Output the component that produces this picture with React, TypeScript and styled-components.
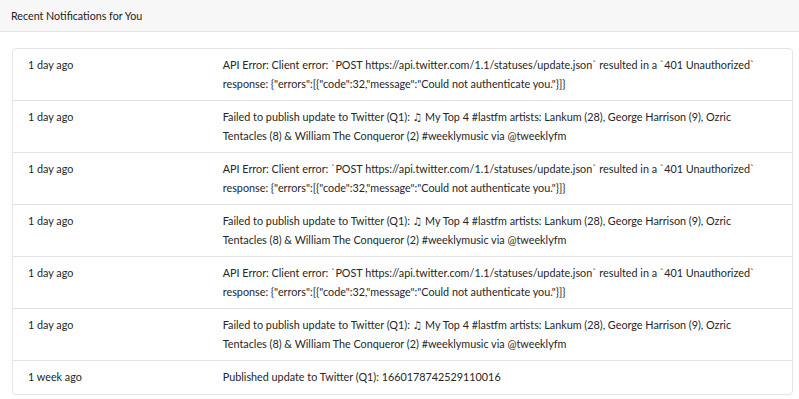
import React from "react";
import styled, { createGlobalStyle } from "styled-components";

type Notification = {
    when: string;
    message: string;
};

const apiError =
    'API Error: Client error: `POST https://api.twitter.com/1.1/statuses/update.json` resulted in a `401 Unauthorized` response: {"errors":[{"code":32,"message":"Could not authenticate you."}]}';
const failed =
    "Failed to publish update to Twitter (Q1): \u266B My Top 4 #lastfm artists: Lankum (28), George Harrison (9), Ozric Tentacles (8) & William The Conqueror (2) #weeklymusic via @tweeklyfm";

const notifications: Notification[] = [
    { when: "1 day ago", message: apiError },
    { when: "1 day ago", message: failed },
    { when: "1 day ago", message: apiError },
    { when: "1 day ago", message: failed },
    { when: "1 day ago", message: apiError },
    { when: "1 day ago", message: failed },
    { when: "1 week ago", message: "Published update to Twitter (Q1): 1660178742529110016" },
];

export default function App() {
    return (
        <>
            <GlobalStyle />
            <Page>
                <Header>Recent Notifications for You</Header>
                <Body>
                    <Table>
                        <tbody>
                            {notifications.map((n, i) => (
                                <Row key={i}>
                                    <DateCell>{n.when}</DateCell>
                                    <MessageCell>{n.message}</MessageCell>
                                </Row>
                            ))}
                        </tbody>
                    </Table>
                </Body>
            </Page>
        </>
    );
}

const GlobalStyle = createGlobalStyle`
    body {
        margin: 0;
        background: #ffffff;
        font-family: "Lato", "DejaVu Sans", sans-serif;
        color: #262626;
    }
`;

const Page = styled.div`
    width: 799px;
`;

const Header = styled.div`
    height: 31px;
    padding: 0 11px;
    display: flex;
    align-items: center;
    background: #f7f7f7;
    border-bottom: 1px solid #e6e6e6;
    font-size: 10.7px;
    color: #222222;
`;

const Body = styled.div`
    padding: 16px 6px 0 12px;
`;

const Table = styled.table`
    width: 100%;
    border-collapse: separate;
    border-spacing: 0;
    border: 1px solid #e4e4e4;
    border-radius: 4px;
    font-size: 10.8px;
    line-height: 18.5px;
`;

const Row = styled.tr`
    & + & td {
        border-top: 1px solid #e4e4e4;
    }
`;

const DateCell = styled.td`
    width: 25%;
    padding: 7px 15px;
    vertical-align: top;
`;

const MessageCell = styled.td`
    padding: 7px 15px;
    vertical-align: top;
`;
